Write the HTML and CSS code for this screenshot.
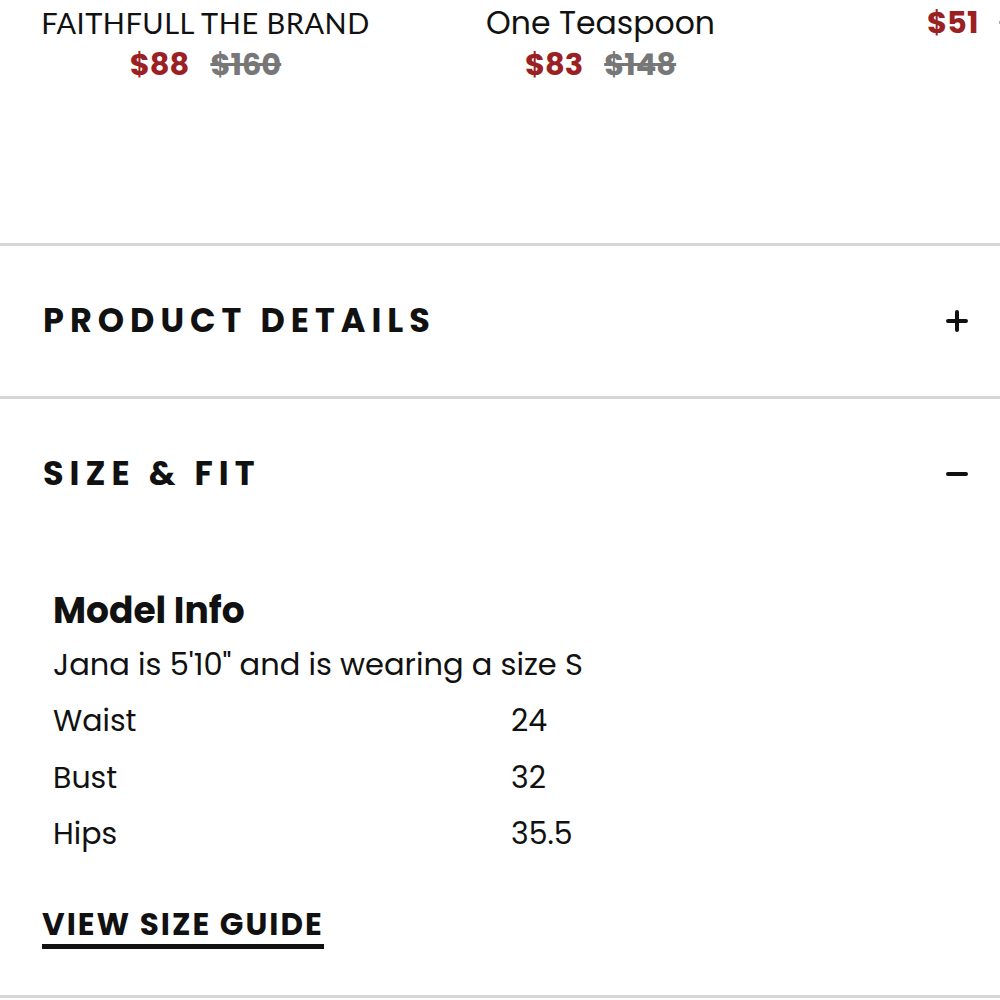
FILE: index.html
```html
<!DOCTYPE html>
<html>
<head>
<meta charset="utf-8">
<link rel="stylesheet" href="styles.css">
</head>
<body>
<section class="carousel">
  <div class="track">
    <div class="product">
      <div class="brand brand-caps">FAITHFULL THE BRAND</div>
      <div class="prices"><span class="sale">$88</span><span class="orig">$160</span></div>
    </div>
    <div class="product">
      <div class="brand">One Teaspoon</div>
      <div class="prices"><span class="sale">$83</span><span class="orig">$148</span></div>
    </div>
    <div class="product product-third">
      <div class="prices prices-top"><span class="sale">$51</span><span class="orig">$98</span></div>
    </div>
  </div>
</section>

<section class="accordion">
  <div class="acc-item">
    <div class="acc-head">
      <h2 class="acc-title">PRODUCT DETAILS</h2>
      <svg class="acc-icon" width="22" height="22" viewBox="0 0 22 22"><path d="M11 2V20M2 11H20" stroke="#111" stroke-width="4" stroke-linecap="round" fill="none"/></svg>
    </div>
  </div>
  <div class="acc-item">
    <div class="acc-head">
      <h2 class="acc-title">SIZE &amp; FIT</h2>
      <svg class="acc-icon" width="22" height="22" viewBox="0 0 22 22"><path d="M2 11H20" stroke="#111" stroke-width="4" stroke-linecap="round" fill="none"/></svg>
    </div>
    <div class="acc-body">
      <h3 class="model-title">Model Info</h3>
      <p class="model-line">Jana is 5'10" and is wearing a size S</p>
      <div class="measure"><span>Waist</span><span>24</span></div>
      <div class="measure"><span>Bust</span><span>32</span></div>
      <div class="measure"><span>Hips</span><span>35.5</span></div>
      <a class="guide" href="#">VIEW SIZE GUIDE</a>
    </div>
  </div>
</section>
</body>
</html>
```

FILE: styles.css
```css
html, body {
  margin: 0;
  padding: 0;
  background: #fff;
}
body {
  font-family: "Poppins", "DejaVu Sans", sans-serif;
  color: #111;
  width: 1000px;
  height: 1000px;
  overflow: hidden;
}
.carousel {
  overflow: hidden;
  height: 243px;
}
.track {
  display: flex;
  padding-left: 8px;
  padding-top: 4px;
}
.product {
  flex: 0 0 395px;
  display: flex;
  flex-direction: column;
  align-items: center;
}
.brand {
  font-size: 31.5px;
  line-height: 38px;
  white-space: nowrap;
  color: #111;
}
.brand-caps {
  font-family: "Lato", sans-serif;
  font-size: 29px;
  font-weight: 400;
  letter-spacing: 0.5px;
}
.prices {
  display: flex;
  gap: 21px;
  font-size: 30.5px;
  line-height: 46px;
  font-weight: 700;
}
.prices-top {
  margin-top: -4px;
  margin-left: -6px;
}
.sale {
  color: #9b2024;
}
.orig {
  color: #777;
  text-decoration: line-through;
  text-decoration-thickness: 3px;
}
.accordion {
  border-top: 3px solid #d6d6d6;
}
.acc-item {
  border-bottom: 3px solid #d6d6d6;
}
.acc-head {
  height: 150px;
  display: flex;
  align-items: center;
  justify-content: space-between;
  padding: 0 32px 0 43px;
}
.acc-title {
  margin: 0;
  font-size: 33.5px;
  font-weight: 700;
  letter-spacing: 6px;
}
.acc-body {
  padding: 36px 53px 46px 53px;
}
.model-title {
  margin: 0;
  font-size: 36px;
  font-weight: 700;
  line-height: 52px;
}
.model-line {
  margin: 0;
  font-size: 30.5px;
  line-height: 56px;
}
.measure {
  display: grid;
  grid-template-columns: 458px 1fr;
  font-size: 30px;
  line-height: 56.5px;
}
.guide {
  display: inline-block;
  margin-top: 46px;
  margin-left: -11px;
  font-size: 31px;
  font-weight: 700;
  letter-spacing: 2px;
  color: #111;
  text-decoration: none;
  line-height: 30px;
  border-bottom: 5px solid #111;
  padding-bottom: 5px;
}
```
